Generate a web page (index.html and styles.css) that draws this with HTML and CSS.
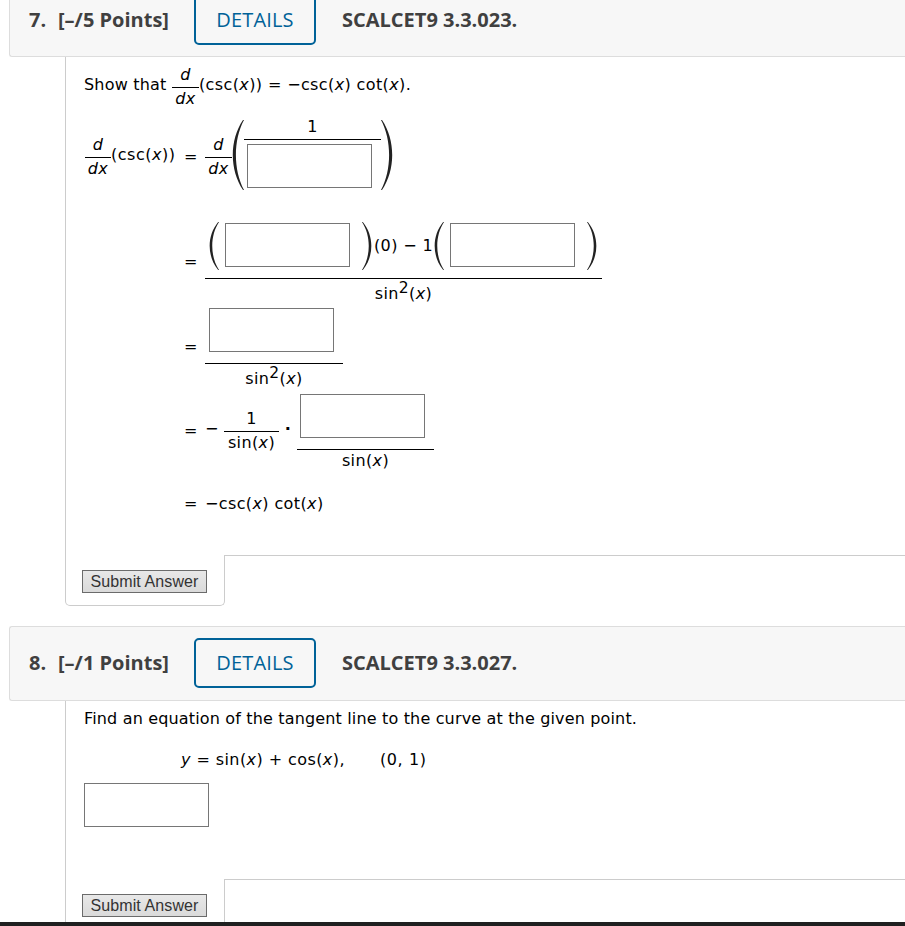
FILE: index.html
```html
<!DOCTYPE html>
<html lang="en">

<head>
  <meta charset="UTF-8" />
  <meta name="viewport" content="width=device-width,initial-scale=1.0" />
  <title>Homework 3.3</title>
  <link rel="stylesheet" href="styles.css">
</head>

<body>
  <svg class="defs">
    <symbol id="lparen" viewBox="0 0 12 70" preserveAspectRatio="none">
      <path d="M11 0 C-2.6 20 -2.6 50 11 70 L12 70 C1.2 50 1.2 20 12 0 Z" />
    </symbol>
    <symbol id="rparen" viewBox="0 0 12 70" preserveAspectRatio="none">
      <path d="M1 0 C14.6 20 14.6 50 1 70 L0 70 C10.8 50 10.8 20 0 0 Z" />
    </symbol>
  </svg>

  <div class="page">
    <!-- question 7 -->
    <div class="header header-first">
      <span class="number">7.</span>
      <span class="points">[–/5 Points]</span>
      <a class="details">DETAILS</a>
      <span class="source">SCALCET9 3.3.023.</span>
    </div>
    <div class="content content-seven">
      <div class="math intro">
        <span class="text show">Show that</span>
        <span class="frac small"><i class="num">d</i><i class="den">dx</i></span>
        <span class="text claim">(csc(<i>x</i>)) = −csc(<i>x</i>) cot(<i>x</i>).</span>
      </div>

      <div class="math line line-a">
        <div class="lhs">
          <span class="frac small"><i class="num">d</i><i class="den">dx</i></span>
          <span class="text">(csc(<i>x</i>))</span>
        </div>
        <span class="eq">=</span>
        <span class="frac small"><i class="num">d</i><i class="den">dx</i></span>
        <svg class="paren big"><use href="#lparen" /></svg>
        <div class="frac over">
          <span class="num">1</span>
          <div class="den"><input type="text" class="answer"></div>
        </div>
        <svg class="paren big"><use href="#rparen" /></svg>
      </div>

      <div class="math line line-b">
        <div class="lhs"></div>
        <span class="eq">=</span>
        <div class="frac wide">
          <div class="num">
            <svg class="paren"><use href="#lparen" /></svg>
            <input type="text" class="answer">
            <svg class="paren"><use href="#rparen" /></svg>
            <span class="middle">(0) − 1</span>
            <svg class="paren"><use href="#lparen" /></svg>
            <input type="text" class="answer">
            <svg class="paren"><use href="#rparen" /></svg>
          </div>
          <span class="den">sin<sup>2</sup>(<i>x</i>)</span>
        </div>
      </div>

      <div class="math line line-c">
        <div class="lhs"></div>
        <span class="eq">=</span>
        <div class="frac single">
          <div class="num"><input type="text" class="answer"></div>
          <span class="den">sin<sup>2</sup>(<i>x</i>)</span>
        </div>
      </div>

      <div class="math line line-d">
        <div class="lhs"></div>
        <span class="eq">=</span>
        <span class="text minus">−</span>
        <span class="frac small one"><span class="num">1</span><span class="den">sin(<i>x</i>)</span></span>
        <span class="text dot">·</span>
        <div class="frac product">
          <div class="num"><input type="text" class="answer"></div>
          <span class="den">sin(<i>x</i>)</span>
        </div>
      </div>

      <div class="math line line-e">
        <div class="lhs"></div>
        <span class="eq">=</span>
        <span class="result">−csc(<i>x</i>) cot(<i>x</i>)</span>
      </div>
    </div>
    <div class="footer">
      <div class="tab"><button type="button" class="submit">Submit Answer</button></div>
      <div class="rest"></div>
    </div>

    <!-- question 8 -->
    <div class="header">
      <span class="number">8.</span>
      <span class="points">[–/1 Points]</span>
      <a class="details">DETAILS</a>
      <span class="source">SCALCET9 3.3.027.</span>
    </div>
    <div class="content content-eight">
      <div class="prompt">Find an equation of the tangent line to the curve at the given point.</div>
      <div class="curve">
        <span class="formula"><i>y</i> = sin(<i>x</i>) + cos(<i>x</i>),</span>
        <span class="point">(0, 1)</span>
      </div>
      <input type="text" class="answer">
    </div>
    <div class="footer">
      <div class="tab"><button type="button" class="submit">Submit Answer</button></div>
      <div class="rest"></div>
    </div>
  </div>
  <div class="bar"></div>
</body>

</html>
```
FILE: styles.css
```css
* {
  box-sizing: border-box;
}

body {
  margin: 0;
  background: #fff;
  color: #000;
  font: 16px/18px Verdana, "DejaVu Sans", sans-serif;
  overflow: hidden;
}

.defs {
  display: none;
}

.page {
  height: 922px;
  padding-left: 9px;
  overflow: hidden;
}

.bar {
  height: 4px;
  background: #202020;
}

/* question header */
.header {
  display: flex;
  align-items: center;
  height: 75px;
  padding: 0 0 1px 19px;
  border: 1px solid #ddd;
  border-right: 0;
  border-radius: 3px 0 0 3px;
  background: #f7f7f7;
  color: #404040;
  font: bold 20px/26px "Open Sans", sans-serif;
  white-space: nowrap;
}

.header-first {
  margin-top: -18px;
  padding-bottom: 0;
}

.number {
  width: 29px;
}

.points {
  width: 136px;
}

.details {
  width: 122px;
  height: 50px;
  margin-right: 26px;
  border: 2px solid #006298;
  border-radius: 5px;
  color: #006298;
  font-weight: 500;
  letter-spacing: 0.15px;
  line-height: 46px;
  text-align: center;
}

/* question body */
.content {
  margin-left: 56px;
  padding-left: 18px;
  border-left: 1px solid #ccc;
}

.content-seven {
  height: 498px;
  padding-top: 9px;
}

.content-eight {
  height: 178px;
  padding-top: 9px;
}

.math {
  display: flex;
  align-items: center;
  letter-spacing: 0.38px;
  white-space: nowrap;
}

.text {
  margin-bottom: 5px;
}

.show {
  width: 88px;
  letter-spacing: 0.2px;
}

.answer {
  display: block;
  flex: none;
  width: 125px;
  height: 44px;
  padding: 0 4px;
  border: 1px solid #767676;
  background: #fff;
}

.paren {
  flex: none;
  width: 10px;
  height: 48px;
  fill: #222;
}

.paren.big {
  width: 12px;
  height: 70px;
  margin-bottom: 4px;
}

/* fractions */
.frac {
  display: flex;
  flex: none;
  flex-direction: column;
  text-align: center;
}

.frac > .den {
  border-top: 1px solid #000;
}

.small {
  width: 27px;
}

.small > .num {
  padding-bottom: 3px;
}

.small > .den {
  padding-top: 2px;
}

.over {
  width: 137px;
}

.over > .num {
  padding-bottom: 3px;
}

.over > .den {
  padding: 4px 0 8px 3px;
}

sup {
  font-size: 15.5px;
  line-height: 0;
  vertical-align: 6px;
}

/* solution lines */
.line {
  height: 85px;
}

.lhs {
  display: flex;
  align-items: center;
  width: 100px;
  letter-spacing: 0.5px;
}

.lhs .small {
  width: 26px;
  margin-left: 1px;
}

.eq {
  width: 21px;
}

.line-a {
  height: 88px;
  margin: 5px 0 18px;
}

.wide {
  width: 397px;
}

.wide > .num {
  display: flex;
  align-items: flex-start;
  height: 59px;
  padding: 3px 4px 0;
}

.wide .answer {
  margin: 1px 12px 0 6px;
}

.middle {
  width: 62px;
  padding-left: 2px;
  line-height: 47px;
  text-align: left;
}

.wide > .den,
.single > .den {
  height: 26px;
  padding-top: 6px;
}

.single {
  width: 138px;
}

.single > .num {
  height: 59px;
  padding: 4px 0 0 4px;
}

.minus {
  width: 19px;
}

.one {
  width: 55px;
  margin-bottom: 2px;
}

.dot {
  width: 18px;
  font-weight: bold;
  text-align: center;
}

.product {
  width: 137px;
}

.product > .num {
  height: 60px;
  padding: 5px 0 0 3px;
}

.product > .den {
  height: 25px;
  padding-top: 2px;
}

.line-d .eq {
  margin-bottom: 1px;
}

.line-e {
  height: 18px;
  margin-top: 21px;
}

/* submit area */
.footer {
  display: flex;
  height: 51px;
  margin: 0 0 20px 56px;
}

.tab {
  width: 160px;
  padding: 15px 0 0 16px;
  border: 1px solid #ccc;
  border-top: 0;
  border-radius: 0 0 5px 5px;
}

.rest {
  flex: 1;
  border-top: 1px solid #ccc;
}

.submit {
  display: block;
  width: 125px;
  height: 23px;
  padding: 0;
  border: 1px solid #6b6b6b;
  border-radius: 0;
  background: linear-gradient(#e8e8e8, #dadada);
  color: #333;
  font: 16px/20px Arial, "Liberation Sans", sans-serif;
  letter-spacing: 0.1px;
}

/* tangent line question */
.prompt {
  letter-spacing: 0.16px;
}

.curve {
  display: flex;
  padding: 23px 0 14px 97px;
  letter-spacing: 0.42px;
}

.formula {
  width: 199px;
}

.point {
  letter-spacing: 0.6px;
}
```
